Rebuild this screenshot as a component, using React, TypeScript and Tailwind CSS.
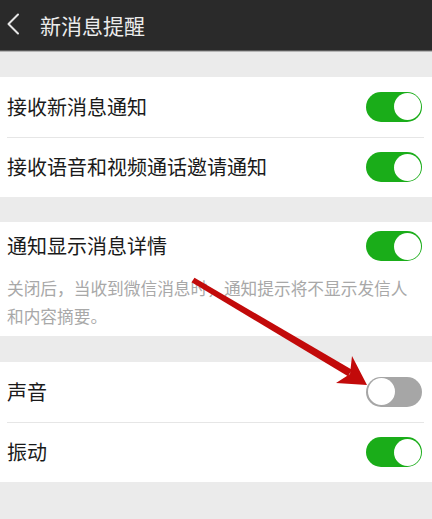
import React from "react";

const font = { fontFamily: '"Noto Sans CJK SC", "Noto Sans", sans-serif' };

function Toggle({ on }: { on: boolean }) {
  if (on) {
    return (
      <div className="w-[56px] h-[30px] rounded-full bg-[#1aad19] flex items-center justify-end p-[1.5px] shrink-0">
        <div className="w-[27px] h-[27px] rounded-full bg-white" />
      </div>
    );
  }
  return (
    <div className="w-[56px] h-[30px] rounded-full bg-[#a6a6a6] flex items-center justify-start p-[1.5px] shrink-0">
      <div className="w-[27px] h-[27px] rounded-full bg-white" />
    </div>
  );
}

function Row({ label, on, h = "h-[59.5px]" }: { label: string; on: boolean; h?: string }) {
  return (
    <div className={`${h} flex items-center justify-between pl-[7px] pr-[10px]`}>
      <span className="text-[20px] text-[#1a1a1a] leading-none">{label}</span>
      <Toggle on={on} />
    </div>
  );
}

function Divider() {
  return <div className="h-px bg-[#e6e6e6] ml-[7px] mr-[8px]" />;
}

export default function App() {
  return (
    <div className="relative w-[432px] h-[519px] bg-[#ebebeb] overflow-hidden" style={font}>
      <div className="h-[50px] bg-[#2a2a2a] flex items-center">
        <svg width="26" height="50" viewBox="0 0 26 50" className="shrink-0">
          <polyline points="18,14.5 8.5,24 18,33.5" fill="none" stroke="#e6e6e6" strokeWidth="2" strokeLinecap="round" strokeLinejoin="round" />
        </svg>
        <span className="ml-[14px] text-[21px] text-[#ececec] leading-none">新消息提醒</span>
      </div>
      <div className="h-px bg-[#5a5a5a]" />
      <div className="h-px bg-[#b5b5b5]" />

      <div className="mt-[25px] bg-white">
        <Row label="接收新消息通知" on />
        <Divider />
        <Row label="接收语音和视频通话邀请通知" on />
      </div>

      <div className="mt-[25px] bg-white">
        <Row label="通知显示消息详情" on h="h-[48px]" />
        <div className="pl-[7px] pr-[8px] pt-[4px] pb-[6px] text-[16.7px] leading-[28px] text-[#a8a8a8]">
          关闭后，当收到微信消息时，通知提示将不显示发信人和内容摘要。
        </div>
      </div>

      <div className="mt-[26px] bg-white">
        <Row label="声音" on={false} />
        <Divider />
        <Row label="振动" on />
      </div>

      <svg className="absolute inset-0 pointer-events-none" width="432" height="519" viewBox="0 0 432 519">
        <polygon points="191.5,282.2 194.5,277.8 352,369.8 348,376.2" fill="#c20a0a" />
        <polygon points="367,385 352,356 350,374 336,383" fill="#c20a0a" />
      </svg>
    </div>
  );
}
